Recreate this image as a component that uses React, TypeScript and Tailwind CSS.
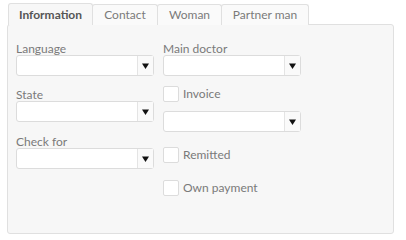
import React from 'react'

const font = {fontFamily: 'Lato, "Open Sans", sans-serif'}

function Select({className = ''}: {className?: string}) {
  return (
    <div className={`flex h-[21px] w-[138px] rounded-[3px] border border-[#dcdcdc] bg-white ${className}`}>
      <div className="flex-1" />
      <div className="flex w-[16px] items-center justify-center border-l border-[#e4e4e4] bg-[#fafafa]">
        <svg width="7" height="6" viewBox="0 0 7 6">
          <path d="M0 0.5h7L3.5 6z" fill="#111" />
        </svg>
      </div>
    </div>
  )
}

function Check({label, className = ''}: {label: string; className?: string}) {
  return (
    <div className={`flex items-center gap-[4px] ${className}`}>
      <div className="h-[16px] w-[16px] rounded-[2px] border border-[#dcdcdc] bg-white" />
      <span className="text-[12px] leading-none text-[#7a7a7a]">{label}</span>
    </div>
  )
}

function Label({children}: {children: React.ReactNode}) {
  return <div className="text-[12px] leading-[13px] text-[#7a7a7a]">{children}</div>
}

export default function App() {
  const tabs = ['Contact', 'Woman', 'Partner man']
  return (
    <div className="h-[240px] w-[406px] bg-white pl-[7px] pt-[3px]" style={font}>
      <div className="relative z-10 -mb-px flex items-end pl-px">
        <div className="flex h-[22px] w-[85px] items-center justify-center rounded-t-[3px] border border-b-0 border-[#e0e0e0] bg-[#f7f7f7] text-[12px] font-bold text-[#555]">
          Information
        </div>
        {tabs.map((t, i) => (
          <div
            key={t}
            className={`-ml-px flex h-[21px] items-center justify-center rounded-t-[3px] border border-b-0 border-[#e0e0e0] bg-[#fafafa] text-[12px] text-[#7a7a7a] ${
              i === 0 ? 'w-[66px]' : i === 1 ? 'w-[65px]' : 'w-[88px]'
            }`}
          >
            {t}
          </div>
        ))}
      </div>
      <div className="flex h-[210px] w-[387px] gap-[9px] rounded-[3px] border border-[#e0e0e0] bg-[#f7f7f7] pl-[8px] pt-[17px]">
        <div className="flex flex-col">
          <Label>Language</Label>
          <Select />
          <div className="h-[12px]" />
          <Label>State</Label>
          <Select />
          <div className="h-[13px]" />
          <Label>Check for</Label>
          <Select />
        </div>
        <div className="flex flex-col">
          <Label>Main doctor</Label>
          <Select />
          <Check label="Invoice" className="mt-[10px]" />
          <Select className="mt-[9px]" />
          <Check label="Remitted" className="mt-[15px]" />
          <Check label="Own payment" className="mt-[17px]" />
        </div>
      </div>
    </div>
  )
}
